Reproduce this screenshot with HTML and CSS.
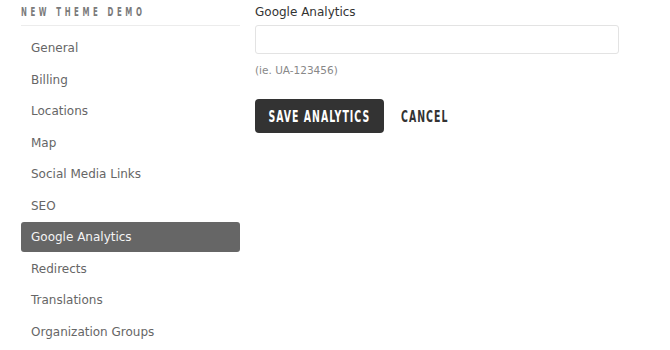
FILE: index.html
```html
<!DOCTYPE html>
<html lang="en">
<head>
<meta charset="utf-8">
<title>Google Analytics</title>
<link rel="stylesheet" href="styles.css">
</head>
<body>
<div class="page">
  <aside class="sidebar">
    <h2 class="side-title"><span class="narrow narrow-left">NEW THEME DEMO</span></h2>
    <nav class="side-nav">
      <a class="nav-item">General</a>
      <a class="nav-item">Billing</a>
      <a class="nav-item">Locations</a>
      <a class="nav-item">Map</a>
      <a class="nav-item">Social Media Links</a>
      <a class="nav-item">SEO</a>
      <a class="nav-item active">Google Analytics</a>
      <a class="nav-item">Redirects</a>
      <a class="nav-item">Translations</a>
      <a class="nav-item">Organization Groups</a>
    </nav>
  </aside>
  <main class="content">
    <label class="field-label">Google Analytics</label>
    <input class="field-input" type="text">
    <div class="field-hint">(ie. UA-123456)</div>
    <div class="actions">
      <button class="btn-primary"><span class="narrow">SAVE ANALYTICS</span></button>
      <button class="btn-link"><span class="narrow narrow-left">CANCEL</span></button>
    </div>
  </main>
</div>
</body>
</html>
```

FILE: styles.css
```css
html, body {
  margin: 0;
  padding: 0;
  background: #ffffff;
}

body {
  font-family: "DejaVu Sans", sans-serif;
  color: #333333;
}

.page {
  display: flex;
  gap: 15px;
  padding-left: 21px;
}

.sidebar {
  width: 219px;
  flex: none;
}

/* condensed display face emulation */
.narrow {
  display: inline-block;
  white-space: nowrap;
  font-family: "DejaVu Sans Condensed", "DejaVu Sans", sans-serif;
  font-stretch: condensed;
  transform: scaleX(0.65);
  transform-origin: center center;
}

.narrow-left {
  transform-origin: left center;
}

.side-title {
  margin: 0;
  padding-top: 5px;
  padding-bottom: 6px;
  font-weight: bold;
  font-size: 13px;
  line-height: 14px;
  letter-spacing: 6px;
  color: #7a7a7a;
  border-bottom: 1px solid #ececec;
  white-space: nowrap;
  overflow: hidden;
}

.side-title .narrow {
  transform: scaleX(0.6);
}

.side-nav {
  display: flex;
  flex-direction: column;
  gap: 1.5px;
  margin-top: 7px;
}

.nav-item {
  display: block;
  height: 29px;
  padding: 1px 10px 0;
  line-height: 29px;
  font-size: 12px;
  color: #666666;
  border-radius: 3px;
  text-decoration: none;
}

.nav-item.active {
  background: #666666;
  color: #f4f4f4;
}

.content {
  flex: 1;
  display: flex;
  flex-direction: column;
  align-items: flex-start;
  padding-top: 4px;
}

.field-label {
  font-size: 12px;
  line-height: 16px;
  color: #333333;
}

.field-input {
  box-sizing: border-box;
  width: 364px;
  height: 29px;
  margin: 5px 0 0;
  border: 1px solid #e3e3e3;
  border-radius: 3px;
  background: #ffffff;
}

.field-hint {
  margin-top: 9px;
  font-size: 10.5px;
  line-height: 14px;
  color: #888888;
}

.actions {
  display: flex;
  align-items: center;
  gap: 17px;
  margin-top: 22px;
}

.btn-primary,
.btn-link {
  font-family: "DejaVu Sans Condensed", "DejaVu Sans", sans-serif;
  font-weight: bold;
  font-size: 16px;
  letter-spacing: 1.6px;
  border: 0;
  cursor: pointer;
}

.btn-primary {
  box-sizing: border-box;
  width: 129px;
  height: 34px;
  padding: 0;
  display: flex;
  align-items: center;
  justify-content: center;
  border-radius: 4px;
  background: #333333;
  color: #ffffff;
}

.btn-link {
  width: 50px;
  padding: 0;
  text-align: left;
  background: transparent;
  color: #333333;
}
```
